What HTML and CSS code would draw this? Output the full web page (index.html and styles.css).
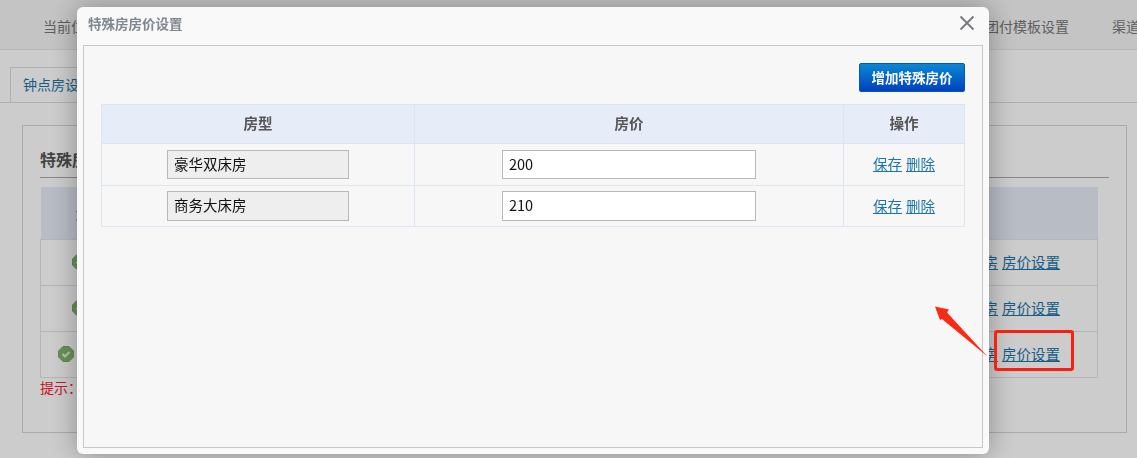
FILE: index.html
```html
<!DOCTYPE html>
<html lang="zh-CN">

<head>
  <title>特殊房房价设置</title>
  <meta charset="utf-8">
  <meta name="viewport" content="width=device-width, initial-scale=1">
  <link rel="stylesheet" href="styles.css">
</head>

<body>

  <div class="page">
    <nav class="topnav">
      <span class="crumb">当前位置</span>
      <a href="#">团付模板设置</a>
      <a href="#">渠道</a>
    </nav>

    <div class="tabs">
      <a class="tab" href="#">钟点房设置</a>
    </div>

    <section class="panel">
      <h3 class="panel-title">特殊房房价设置</h3>
      <table class="rooms">
        <colgroup>
          <col class="c-name">
          <col>
          <col class="c-ops">
        </colgroup>
        <tr>
          <th>大床房型</th>
          <th>状态</th>
          <th>操作</th>
        </tr>
        <tr>
          <td class="c-state">
            <svg class="ok" width="16" height="16" viewBox="0 0 16 16">
              <path d="M5 .5h6L15.500 5v6L11 15.500H5L.5 11V5Z" fill="#7fb868" stroke="#8a9a84"/>
              <path d="M4.500 8l2.500 2.500 4.500-4.500" stroke="#e8f2e2" stroke-width="2" fill="none"/>
            </svg><span>特殊房</span>
          </td>
          <td></td>
          <td class="ops"><a href="#">设置房</a> <a href="#">房价设置</a></td>
        </tr>
        <tr>
          <td class="c-state">
            <svg class="ok" width="16" height="16" viewBox="0 0 16 16">
              <path d="M5 .5h6L15.500 5v6L11 15.500H5L.5 11V5Z" fill="#7fb868" stroke="#8a9a84"/>
              <path d="M4.500 8l2.500 2.500 4.500-4.500" stroke="#e8f2e2" stroke-width="2" fill="none"/>
            </svg><span>特殊房</span>
          </td>
          <td></td>
          <td class="ops"><a href="#">设置房</a> <a href="#">房价设置</a></td>
        </tr>
        <tr>
          <td class="c-state">
            <svg class="ok" width="16" height="16" viewBox="0 0 16 16">
              <path d="M5 .5h6L15.500 5v6L11 15.500H5L.5 11V5Z" fill="#7fb868" stroke="#8a9a84"/>
              <path d="M4.500 8l2.500 2.500 4.500-4.500" stroke="#e8f2e2" stroke-width="2" fill="none"/>
            </svg><span>特殊房房价</span>
          </td>
          <td></td>
          <td class="ops"><a href="#">设置房</a> <a href="#">房价设置</a></td>
        </tr>
      </table>
      <p class="tip">提示：</p>
    </section>
  </div>

  <div class="mask"></div>

  <div class="modal">
    <div class="modal-head">
      <span class="modal-title">特殊房房价设置</span>
      <svg class="close" width="16" height="16" viewBox="0 0 16 16">
        <path d="M1.500 1.500l13 13M14.500 1.500l-13 13" stroke="#77797c" stroke-width="1.800" fill="none"/>
      </svg>
    </div>
    <div class="modal-body">
      <div class="toolbar">
        <button class="addBtn">增加特殊房价</button>
      </div>
      <table class="prices">
        <colgroup>
          <col class="p-type">
          <col>
          <col class="p-ops">
        </colgroup>
        <tr class="head-row">
          <th>房型</th>
          <th>房价</th>
          <th>操作</th>
        </tr>
        <tr>
          <td><input class="type-input" type="text" value="豪华双床房" readonly></td>
          <td><input class="price-input" type="text" value="200"></td>
          <td class="links"><a href="#">保存</a> <a href="#">删除</a></td>
        </tr>
        <tr>
          <td><input class="type-input" type="text" value="商务大床房" readonly></td>
          <td><input class="price-input" type="text" value="210"></td>
          <td class="links"><a href="#">保存</a> <a href="#">删除</a></td>
        </tr>
      </table>
    </div>
  </div>

  <!-- annotation drawn over the screenshot -->
  <div class="mark-box"></div>
  <svg class="mark-arrow" width="54" height="52" viewBox="0 0 54 52">
    <path d="M0 .5L14 3.500L12 6.500L52.500 50.500L7 13L5 14Z" fill="#fa2a14"/>
  </svg>

</body>

</html>
```

FILE: styles.css
```css
* {
  box-sizing: border-box;
}

html,
body {
  margin: 0;
  height: 458px;
  overflow: hidden;
  background-color: #fff;
  font-family: "Liberation Sans", "Noto Sans CJK SC", sans-serif;
  font-size: 14px;
  color: #333;
}

a {
  color: #1b75a8;
}

/* Page behind the dialog */
.page {
  height: 458px;
}

.topnav {
  display: flex;
  gap: 43px;
  align-items: center;
  height: 50px;
  margin-right: -3px;
  padding: 2px 0 0 43px;
  background-color: #f5f5f5;
  border-bottom: 1px solid #e6e6e6;
}

.topnav a {
  color: #777;
  text-decoration: none;
}

.crumb {
  flex: 1;
  color: #777;
}

.tabs {
  height: 53px;
  padding: 17px 0 0 10px;
  border-bottom: 1px solid #dcdcdc;
}

.tab {
  display: inline-block;
  width: 120px;
  height: 36px;
  padding: 0 12px;
  line-height: 34px;
  border: 1px solid #dcdcdc;
  border-bottom: 0;
  text-decoration: none;
}

.panel {
  width: 1105px;
  height: 308px;
  margin: 22px 0 0 22px;
  padding: 17px 17px 0;
  border: 1px solid #d6d6d6;
}

.panel-title {
  margin: 0 0 9px;
  height: 35px;
  line-height: 35px;
  font-size: 16px;
  color: #555;
  border-bottom: 1px solid #aaa;
}

.rooms {
  width: 1058px;
  border-collapse: collapse;
  table-layout: fixed;
}

.rooms th {
  height: 52px;
  background-color: #e6ebf6;
  font-weight: bold;
  color: #555;
}

.rooms th:first-child {
  font-weight: normal;
}

.rooms td {
  height: 46px;
  border: 1px solid #e3e3e3;
}

.c-name {
  width: 126px;
}

.c-ops {
  width: 400px;
}

.c-state {
  text-align: center;
  color: #e08a2c;
  white-space: nowrap;
}

.ok {
  margin-right: 5px;
  vertical-align: -2px;
}

.ops {
  padding: 0 37px 2px 0;
  text-align: right;
  font-size: 14.500px;
}

.tip {
  margin: 0;
  line-height: 20px;
  color: #f4202e;
}

/* Dark layer over the page */
.mask {
  position: fixed;
  inset: 0;
  background-color: rgba(0, 0, 0, 0.2);
}

/* The dialog */
.modal {
  position: fixed;
  left: 77px;
  top: 7px;
  width: 912px;
  height: 447px;
  padding: 0 6px 6px;
  background-color: #f9f9f9;
  border-radius: 6px;
  box-shadow: 0 0 28px rgba(0, 0, 0, 0.32);
}

.modal-head {
  display: flex;
  align-items: center;
  justify-content: space-between;
  height: 38px;
  padding: 0 0 6px 5px;
}

.modal-title {
  font-weight: bold;
  font-size: 13.500px;
  color: #7d8790;
}

.close {
  margin-right: 8px;
}

.modal-body {
  height: 403px;
  padding: 17px 17px 0;
  background-color: #f7f7f7;
  border: 1px solid #c8c8c8;
}

.toolbar {
  display: flex;
  justify-content: flex-end;
  height: 41px;
}

.addBtn {
  width: 106px;
  height: 29px;
  padding: 0 0 2px;
  border: 1px solid #0a56ae;
  border-radius: 2px;
  background: linear-gradient(#0a88d2, #0040c0);
  color: white;
  font-family: inherit;
  font-size: 13.500px;
  font-weight: bold;
}

.prices {
  width: 864px;
  border-collapse: collapse;
  table-layout: fixed;
}

.prices th,
.prices td {
  border: 1px solid #dde5f1;
  text-align: center;
  padding: 0;
}

.prices th {
  height: 39px;
  padding-bottom: 3px;
  background-color: #e6edf8;
  font-size: 14.500px;
  font-weight: bold;
  color: #555;
}

.prices td {
  height: 41.500px;
}

.prices td.links {
  padding-bottom: 1px;
  font-size: 14.500px;
}

.p-type {
  width: 313px;
}

.p-ops {
  width: 121px;
}

.prices input {
  display: inline-block;
  height: 29.500px;
  padding: 0 6px 2px;
  vertical-align: middle;
  border: 1px solid #b8b8b8;
  border-radius: 0;
  outline: none;
  color: #111;
  font-family: "Noto Sans CJK SC", sans-serif;
  font-size: 14.500px;
}

.type-input {
  width: 182px;
  background-color: #eee;
}

.price-input {
  width: 254px;
  background-color: #fff;
}

/* Red annotation */
.mark-box {
  position: fixed;
  left: 994px;
  top: 330px;
  width: 80px;
  height: 41px;
  border: 3px solid #f8200e;
  border-radius: 3px;
}

.mark-arrow {
  position: fixed;
  left: 935px;
  top: 306px;
}
```
